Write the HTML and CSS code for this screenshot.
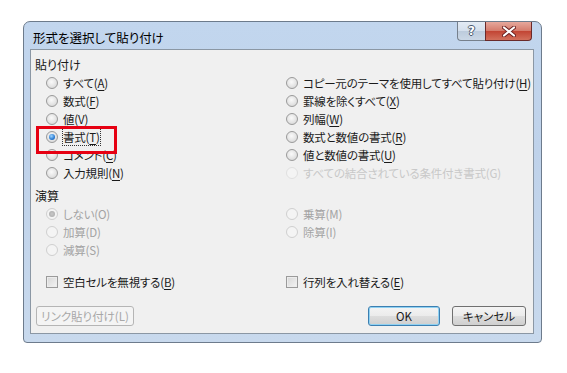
FILE: index.html
```html
<!DOCTYPE html>
<html>

<head>
    <title>形式を選択して貼り付け</title>

    <link rel="stylesheet" href="styles.css">
</head>

<body>
    <div class="dialog">
        <div class="titlebar">
            <span class="title">形式を選択して貼り付け</span>
            <div class="caption-buttons">
                <span class="cap-btn help">?</span>
                <span class="cap-btn close">
                    <svg width="14" height="11" viewBox="0 0 14 11">
                        <path d="M2 1.5 L12 9.5 M12 1.5 L2 9.5" stroke="#6b2020" stroke-width="4" stroke-linecap="round"/>
                        <path d="M2 1.5 L12 9.5 M12 1.5 L2 9.5" stroke="#ffffff" stroke-width="2.2" stroke-linecap="round"/>
                    </svg>
                </span>
            </div>
        </div>

        <div class="client">
            <div class="group-label">貼り付け</div>
            <div class="options">
                <div class="option"><span class="radio"></span><span>すべて(<u>A</u>)</span></div>
                <div class="option"><span class="radio"></span><span>コピー元のテーマを使用してすべて貼り付け(<u>H</u>)</span></div>
                <div class="option"><span class="radio"></span><span>数式(<u>F</u>)</span></div>
                <div class="option"><span class="radio"></span><span>罫線を除くすべて(<u>X</u>)</span></div>
                <div class="option"><span class="radio"></span><span>値(<u>V</u>)</span></div>
                <div class="option"><span class="radio"></span><span>列幅(<u>W</u>)</span></div>
                <div class="option"><span class="radio checked"></span><span class="focus">書式(<u>T</u>)</span></div>
                <div class="option"><span class="radio"></span><span>数式と数値の書式(<u>R</u>)</span></div>
                <div class="option"><span class="radio"></span><span>コメント(<u>C</u>)</span></div>
                <div class="option"><span class="radio"></span><span>値と数値の書式(<u>U</u>)</span></div>
                <div class="option"><span class="radio"></span><span>入力規則(<u>N</u>)</span></div>
                <div class="option faint"><span class="radio"></span><span>すべての結合されている条件付き書式(G)</span></div>
            </div>

            <div class="group-label ops-label">演算</div>
            <div class="options">
                <div class="option disabled"><span class="radio checked"></span><span>しない(O)</span></div>
                <div class="option disabled"><span class="radio"></span><span>乗算(M)</span></div>
                <div class="option disabled"><span class="radio"></span><span>加算(D)</span></div>
                <div class="option disabled"><span class="radio"></span><span>除算(I)</span></div>
                <div class="option disabled"><span class="radio"></span><span>減算(S)</span></div>
            </div>

            <div class="options checks">
                <div class="option"><span class="checkbox"></span><span>空白セルを無視する(<u>B</u>)</span></div>
                <div class="option"><span class="checkbox"></span><span>行列を入れ替える(<u>E</u>)</span></div>
            </div>

            <div class="buttons">
                <span class="btn link-btn">リンク貼り付け(L)</span>
                <span class="btn ok-btn">OK</span>
                <span class="btn">キャンセル</span>
            </div>

            <div class="highlight"></div>
        </div>
    </div>
</body>

</html>
```

FILE: styles.css
```css
body {
    margin: 0;
    background-color: #ffffff;
    font-family: "Noto Sans CJK JP", "Noto Sans", sans-serif;
    font-size: 12px;
    font-feature-settings: "palt";
    color: #1a1a1a;
}

.dialog {
    box-sizing: border-box;
    width: 519px;
    height: 322px;
    margin: 21px 0 0 23px;
    padding: 0 7px 8px 6px;
    display: flex;
    flex-direction: column;
    border: 1px solid #6d7b8c;
    border-radius: 7px 7px 4px 4px;
    background: linear-gradient(#c2d6ee, #bfd2ea 40%, #c8d9ed); /* glass frame */
}

.titlebar {
    height: 27px;
    display: flex;
    justify-content: space-between;
    align-items: flex-start;
}

.title {
    padding: 8px 0 0 3px;
    font-size: 12.5px;
    line-height: 16px;
    color: #000000;
}

.caption-buttons {
    display: flex;
    margin-right: 2px;
}

.cap-btn {
    box-sizing: border-box;
    height: 19px;
    display: flex;
    align-items: center;
    justify-content: center;
    border: 1px solid #76808c;
    border-top: none;
}

.help {
    width: 28px;
    border-radius: 0 0 0 4px;
    border-right: none;
    background: linear-gradient(#e3ebf4, #d4dfec 50%, #bccbdc 51%, #cbd8e6);
    color: #ffffff;
    font-family: "DejaVu Sans", sans-serif;
    font-weight: bold;
    font-size: 12px;
    text-shadow: 1px 0 0 #4a5a6e, -1px 0 0 #4a5a6e, 0 1px 0 #4a5a6e, 0 -1px 0 #4a5a6e;
}

.close {
    width: 47px;
    border-radius: 0 0 4px 0;
    border-color: #6a2a2a;
    background: linear-gradient(#e6a89c, #d47a6b 50%, #c24433 51%, #d2705c);
}

.client {
    flex: 1;
    position: relative;
    padding-top: 6px;
    border: 1px solid #8b97a4;
    background-color: #f0f0f0;
}

.group-label {
    height: 18px;
    line-height: 18px;
    padding-left: 4px;
}

.ops-label {
    margin-top: 5px;
}

.options {
    display: grid;
    grid-template-columns: 240px 1fr;
    grid-auto-rows: 18px;
    margin-left: 15px;
    font-size: 11.5px;
    letter-spacing: -0.2px;
}

.option {
    display: flex;
    align-items: center;
    gap: 5px;
    white-space: nowrap;
}

.option u {
    text-decoration-thickness: 1px;
    text-underline-offset: 2px;
}

.disabled {
    color: #a3a3a3;
}

.faint {
    color: #c8c8c8;
}

.radio {
    box-sizing: border-box;
    width: 12px;
    height: 12px;
    flex: none;
    border-radius: 50%;
    border: 1px solid #9a9a9a;
    background: radial-gradient(circle at 45% 40%, #fafafa, #e4e4e4 55%, #cfcfcf);
    position: relative;
}

.radio.checked::after {
    content: "";
    position: absolute;
    left: 2px;
    top: 2px;
    width: 6px;
    height: 6px;
    border-radius: 50%;
    background: radial-gradient(circle at 40% 35%, #9fd6ff, #2a7bd2 60%, #1b4f94);
}

.disabled .radio,
.faint .radio {
    border-color: #cfcfcf;
    background: #f4f4f4;
}

.disabled .radio.checked::after {
    background: radial-gradient(circle, #c8c8c8, #a8a8a8);
}

.faint .radio {
    border-color: #e0e0e0;
}

.focus {
    outline: 1px dotted #333333;
    outline-offset: 0;
}

.checks {
    margin-top: 14px;
}

.checkbox {
    box-sizing: border-box;
    width: 12px;
    height: 12px;
    flex: none;
    border: 1px solid #9a9a9a;
    background: linear-gradient(135deg, #d6d6d6, #f4f4f4);
    box-shadow: inset 0 0 0 1px #ececec;
}

.buttons {
    display: flex;
    gap: 12px;
    margin-top: 15px;
    padding: 0 7px 0 5px;
}

.btn {
    box-sizing: border-box;
    width: 74px;
    height: 20px;
    display: flex;
    align-items: center;
    justify-content: center;
    border: 1px solid #707070;
    border-radius: 3px;
    background: linear-gradient(#f4f4f4, #ebebeb 50%, #dddddd 51%, #cfcfcf);
    font-size: 11.5px;
}

.link-btn {
    width: 98px;
    margin-right: auto;
    border-color: #b5b5b5;
    background: #f4f4f4;
    color: #a8a8a8;
}

.ok-btn {
    width: 72px;
    border-color: #3c7fb1;
    box-shadow: inset 0 0 0 1px #8fd1f2;
}

.highlight {
    position: absolute;
    left: 5px;
    top: 76px;
    width: 75px;
    height: 22px;
    border: 3px solid #e60012;
}
```
